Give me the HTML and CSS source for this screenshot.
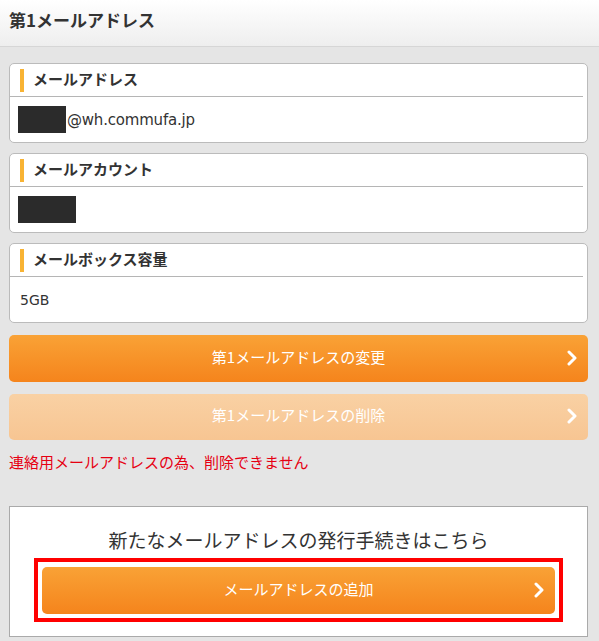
FILE: index.html
```html
<!DOCTYPE html>
<html lang="ja">
<head>
<meta charset="utf-8">
<title>第1メールアドレス</title>
<link rel="stylesheet" href="styles.css">
</head>
<body>
<header class="page-header">
  <h1 class="page-title">第1メールアドレス</h1>
</header>
<main class="content">
  <section class="card">
    <div class="card-head"><span class="card-label">メールアドレス</span></div>
    <div class="card-body"><span class="mask mask-short"></span><span class="value-text">@wh.commufa.jp</span></div>
  </section>
  <section class="card">
    <div class="card-head"><span class="card-label">メールアカウント</span></div>
    <div class="card-body"><span class="mask mask-long"></span></div>
  </section>
  <section class="card">
    <div class="card-head"><span class="card-label">メールボックス容量</span></div>
    <div class="card-body"><span class="value-small">5GB</span></div>
  </section>

  <a class="btn" href="#"><span class="btn-text">第1メールアドレスの変更</span><svg class="chev" viewBox="0 0 10 16" width="10" height="16"><path d="M2 2 L8 8 L2 14" fill="none" stroke="#fff" stroke-width="3" stroke-linecap="round" stroke-linejoin="round"/></svg></a>
  <a class="btn btn-disabled" href="#"><span class="btn-text">第1メールアドレスの削除</span><svg class="chev" viewBox="0 0 10 16" width="10" height="16"><path d="M2 2 L8 8 L2 14" fill="none" stroke="#fff" stroke-width="3" stroke-linecap="round" stroke-linejoin="round"/></svg></a>
  <p class="notice">連絡用メールアドレスの為、削除できません</p>

  <section class="add-box">
    <p class="add-lead">新たなメールアドレスの発行手続きはこちら</p>
    <div class="highlight">
      <a class="btn btn-add" href="#"><span class="btn-text">メールアドレスの追加</span><svg class="chev" viewBox="0 0 10 16" width="10" height="16"><path d="M2 2 L8 8 L2 14" fill="none" stroke="#fff" stroke-width="3" stroke-linecap="round" stroke-linejoin="round"/></svg></a>
    </div>
  </section>
</main>
</body>
</html>
```

FILE: styles.css
```css
* { box-sizing: border-box; }

html, body {
  margin: 0;
  padding: 0;
  background: #e5e5e5;
  font-family: "Noto Sans CJK JP", "Noto Sans", "DejaVu Sans", sans-serif;
  color: #333;
}

.page-header {
  height: 47px;
  background: linear-gradient(#ffffff, #eeeeee);
  border-bottom: 1px solid #d6d6d6;
  display: flex;
  align-items: center;
  padding-left: 9px;
}

.page-title {
  margin: 0 0 8px;
  font-size: 17px;
  font-weight: bold;
  color: #333;
  line-height: 1;
}

.content {
  padding: 16px 11px 0 9px;
}

.card {
  background: #fff;
  border: 1px solid #bbbbbb;
  border-radius: 5px;
  height: 80px;
  margin-bottom: 10px;
  display: flex;
  flex-direction: column;
}

.card-head {
  height: 33px;
  border-bottom: 1px solid #b5b5b5;
  margin-right: 4px;
  display: flex;
  align-items: center;
  padding-left: 10px;
}

.card-label {
  display: flex;
  align-items: center;
  height: 23px;
  border-left: 4px solid #f8b334;
  padding-left: 9px;
  padding-bottom: 3px;
  font-size: 15px;
  font-weight: bold;
  color: #333;
  line-height: 1;
}

.card-body {
  flex: 1;
  display: flex;
  align-items: center;
  padding-left: 8px;
}

.mask {
  display: inline-block;
  height: 27px;
  background: #2b2b2b;
}

.mask-short { width: 48px; }
.mask-long { width: 58px; }

.value-text {
  font-family: "DejaVu Sans", sans-serif;
  font-size: 15px;
  color: #333;
  margin-left: 1px;
  letter-spacing: -0.2px;
}

.value-small {
  font-family: "DejaVu Sans", sans-serif;
  font-size: 14px;
  color: #333;
  margin-left: 2px;
}

.btn {
  position: relative;
  display: flex;
  align-items: center;
  justify-content: center;
  height: 47px;
  margin-top: 12px;
  border-radius: 5px;
  background: linear-gradient(#f9a236, #f5841c);
  color: #fff;
  text-decoration: none;
  font-size: 15px;
}

.btn + .btn { margin-top: 12px; height: 46px; }

.btn-disabled {
  background: linear-gradient(#f9d1a4, #f7c592);
}

.btn-text { line-height: 1; padding-bottom: 5px; }

.chev {
  position: absolute;
  right: 11px;
  top: 50%;
  margin-top: -9px;
}

.notice {
  margin: 12px 0 0;
  font-size: 15px;
  color: #e60012;
  line-height: 20px;
}

.add-box {
  margin-top: 34px;
  background: #fff;
  border: 1px solid #aaaaaa;
  padding: 19px 24px 14px;
}

.add-lead {
  margin: 0 0 4px;
  text-align: center;
  font-size: 19px;
  line-height: 28px;
  color: #333;
}

.highlight {
  border: 4px solid #ff0000;
  padding: 5px 4px 4px;
}

.btn-add {
  margin-top: 0;
  height: 47px;
}
```
